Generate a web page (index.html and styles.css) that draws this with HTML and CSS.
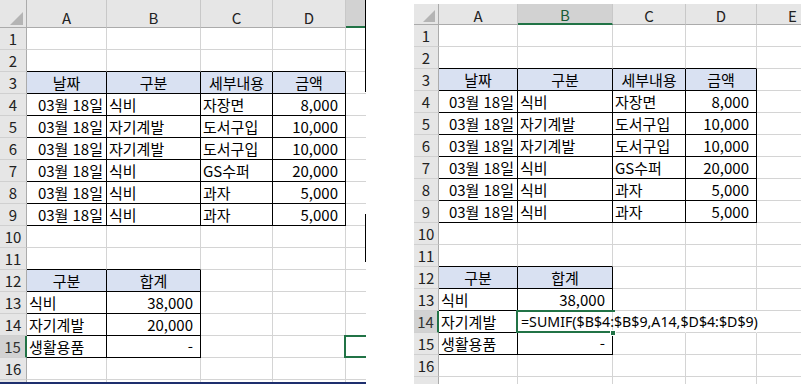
FILE: index.html
```html
<!DOCTYPE html>
<html lang="ko">
<head>
<meta charset="utf-8">
<title>SUMIF</title>
<link rel="stylesheet" href="styles.css">
</head>
<body>
<div class="page">
  <div class="sheet sheet-left">
    <table class="grid grid-left">
      <colgroup><col class="l-rh"><col class="l-a"><col class="l-b"><col class="l-c"><col class="l-d"><col class="l-e"></colgroup>
      <tr class="hdr"><th class="corner"><span class="tri"></span></th><th class="ch">A</th><th class="ch">B</th><th class="ch">C</th><th class="ch">D</th><th class="ch sel-col"></th></tr>
      <tr><th class="rh">1</th><td></td><td></td><td></td><td></td><td></td></tr>
      <tr><th class="rh">2</th><td class="bb"></td><td class="bb"></td><td class="bb"></td><td class="bb"></td><td></td></tr>
      <tr><th class="rh">3</th><td class="hd c br bb">날짜</td><td class="hd c br bb">구분</td><td class="hd c br bb">세부내용</td><td class="hd c br bb">금액</td><td></td></tr>
      <tr><th class="rh">4</th><td class="dt br bb">03월 18일</td><td class="l br bb">식비</td><td class="l br bb">자장면</td><td class="r br bb">8,000</td><td></td></tr>
      <tr><th class="rh">5</th><td class="dt br bb">03월 18일</td><td class="l br bb">자기계발</td><td class="l br bb">도서구입</td><td class="r br bb">10,000</td><td></td></tr>
      <tr><th class="rh">6</th><td class="dt br bb">03월 18일</td><td class="l br bb">자기계발</td><td class="l br bb">도서구입</td><td class="r br bb">10,000</td><td></td></tr>
      <tr><th class="rh">7</th><td class="dt br bb">03월 18일</td><td class="l br bb">식비</td><td class="l br bb">GS수퍼</td><td class="r br bb">20,000</td><td></td></tr>
      <tr><th class="rh">8</th><td class="dt br bb">03월 18일</td><td class="l br bb">식비</td><td class="l br bb">과자</td><td class="r br bb">5,000</td><td></td></tr>
      <tr><th class="rh">9</th><td class="dt br bb">03월 18일</td><td class="l br bb">식비</td><td class="l br bb">과자</td><td class="r br bb">5,000</td><td></td></tr>
      <tr><th class="rh">10</th><td></td><td></td><td></td><td></td><td></td></tr>
      <tr><th class="rh">11</th><td class="bb"></td><td class="bb"></td><td></td><td></td><td></td></tr>
      <tr><th class="rh">12</th><td class="hd c br bb">구분</td><td class="hd c br bb">합계</td><td></td><td></td><td></td></tr>
      <tr><th class="rh">13</th><td class="l br bb">식비</td><td class="r br bb">38,000</td><td></td><td></td><td></td></tr>
      <tr><th class="rh">14</th><td class="l br bb">자기계발</td><td class="r br bb">20,000</td><td></td><td></td><td></td></tr>
      <tr><th class="rh sel-row">15</th><td class="l br bb">생활용품</td><td class="r br bb">-</td><td></td><td></td><td class="active"></td></tr>
      <tr><th class="rh">16</th><td></td><td></td><td></td><td></td><td></td></tr>
      <tr><th class="rh"></th><td></td><td></td><td></td><td></td><td></td></tr>
    </table>
  </div>

  <div class="sheet sheet-right">
    <table class="grid grid-right">
      <colgroup><col class="r-rh"><col class="r-a"><col class="r-b"><col class="r-c"><col class="r-d"><col class="r-e"></colgroup>
      <tr class="hdr"><th class="corner"><span class="tri"></span></th><th class="ch">A</th><th class="ch sel-col">B</th><th class="ch">C</th><th class="ch">D</th><th class="ch">E</th></tr>
      <tr><th class="rh">1</th><td></td><td></td><td></td><td></td><td></td></tr>
      <tr><th class="rh">2</th><td class="bb"></td><td class="bb"></td><td class="bb"></td><td class="bb"></td><td></td></tr>
      <tr><th class="rh">3</th><td class="hd c br bb">날짜</td><td class="hd c br bb">구분</td><td class="hd c br bb">세부내용</td><td class="hd c br bb">금액</td><td></td></tr>
      <tr><th class="rh">4</th><td class="dt br bb">03월 18일</td><td class="l br bb">식비</td><td class="l br bb">자장면</td><td class="r br bb">8,000</td><td></td></tr>
      <tr><th class="rh">5</th><td class="dt br bb">03월 18일</td><td class="l br bb">자기계발</td><td class="l br bb">도서구입</td><td class="r br bb">10,000</td><td></td></tr>
      <tr><th class="rh">6</th><td class="dt br bb">03월 18일</td><td class="l br bb">자기계발</td><td class="l br bb">도서구입</td><td class="r br bb">10,000</td><td></td></tr>
      <tr><th class="rh">7</th><td class="dt br bb">03월 18일</td><td class="l br bb">식비</td><td class="l br bb">GS수퍼</td><td class="r br bb">20,000</td><td></td></tr>
      <tr><th class="rh">8</th><td class="dt br bb">03월 18일</td><td class="l br bb">식비</td><td class="l br bb">과자</td><td class="r br bb">5,000</td><td></td></tr>
      <tr><th class="rh">9</th><td class="dt br bb">03월 18일</td><td class="l br bb">식비</td><td class="l br bb">과자</td><td class="r br bb">5,000</td><td></td></tr>
      <tr><th class="rh">10</th><td></td><td></td><td></td><td></td><td></td></tr>
      <tr><th class="rh">11</th><td class="bb"></td><td class="bb"></td><td></td><td></td><td></td></tr>
      <tr><th class="rh">12</th><td class="hd c br bb">구분</td><td class="hd c br bb">합계</td><td></td><td></td><td></td></tr>
      <tr><th class="rh">13</th><td class="l br bb">식비</td><td class="r br bb">38,000</td><td></td><td></td><td></td></tr>
      <tr><th class="rh sel-row">14</th><td class="l br bb">자기계발</td><td class="l editing"><span class="formula">=SUMIF($B$4:$B$9,A14,$D$4:$D$9)</span><span class="handle"></span></td><td class="ov"></td><td class="ov"></td><td></td></tr>
      <tr><th class="rh">15</th><td class="l br bb">생활용품</td><td class="r br bb">-</td><td></td><td></td><td></td></tr>
      <tr><th class="rh">16</th><td></td><td></td><td></td><td></td><td></td></tr>
      <tr><th class="rh"></th><td></td><td></td><td></td><td></td><td></td></tr>
    </table>
  </div>
</div>
</body>
</html>
```

FILE: styles.css
```css
* { box-sizing: border-box; }

html, body {
  margin: 0;
  padding: 0;
  background: #fff;
}

body {
  width: 801px;
  height: 384px;
  overflow: hidden;
  font-family: "Noto Sans CJK KR", "Noto Sans", sans-serif;
  font-size: 15px;
  color: #000;
}

.page {
  display: flex;
  justify-content: space-between;
  align-items: flex-start;
  width: 801px;
  height: 384px;
}

.sheet {
  position: relative;
  overflow: hidden;
  height: 384px;
}

.sheet-left {
  width: 366px;
  border-bottom: 2px solid #1e2f6e;
}

/* window edge artefacts on the right of the left capture */
.sheet-left::before,
.sheet-left::after {
  content: "";
  position: absolute;
  left: 365px;
  width: 1px;
  background: #000;
}
.sheet-left::before { top: 0; height: 92px; }
.sheet-left::after { top: 214px; height: 48px; }

.sheet-right {
  width: 387px;
  padding-top: 4px;
}

.grid {
  border-collapse: separate;
  border-spacing: 0;
  table-layout: fixed;
}
.grid-left { width: 418px; }
.grid-right { width: 415px; }

.l-rh { width: 27px; }
.l-a { width: 80px; }
.l-b { width: 94px; }
.l-c { width: 72px; }
.l-d { width: 73px; }
.l-e { width: 72px; }

.r-rh { width: 25px; }
.r-a { width: 79px; }
.r-b { width: 95px; }
.r-c { width: 73px; }
.r-d { width: 71px; }
.r-e { width: 72px; }

.grid td,
.grid th {
  padding: 0;
  height: 22px;
  line-height: 20px;
  border-right: 1px solid #d4d4d4;
  border-bottom: 1px solid #d4d4d4;
  white-space: nowrap;
  overflow: hidden;
  font-weight: normal;
  vertical-align: middle;
}

/* column headers */
.grid .hdr th {
  background: #e6e6e6;
  color: #222;
  text-align: center;
  vertical-align: bottom;
  border-right-color: #c8c8c8;
  border-bottom-color: #ababab;
}
.grid-left .hdr th { height: 28px; line-height: 19px; }
.grid-right .hdr th { height: 21px; line-height: 17px; }

.grid .hdr th.corner {
  text-align: right;
  padding: 0 3px 2px 0;
  line-height: 0;
  border-right-color: #ababab;
}
.tri {
  display: inline-block;
  width: 0;
  height: 0;
  border-left: 13px solid transparent;
  border-bottom: 13px solid #b4b4b4;
}
.grid-right .tri {
  border-left-width: 12px;
  border-bottom-width: 12px;
}

/* row headers */
.grid th.rh {
  background: #e6e6e6;
  color: #222;
  text-align: center;
  border-right-color: #ababab;
  border-bottom-color: #d0d0d0;
}

.grid .hdr th.sel-col {
  background: #d2d2d2;
  color: #1b5e37;
  border-bottom: 2px solid #217346;
}
.grid th.rh.sel-row {
  background: #d2d2d2;
  color: #333;
  border-right: 2px solid #217346;
}

/* cell formatting */
.grid td.hd { background: #d9e1f2; }
.grid td.br { border-right-color: #000; }
.grid td.bb { border-bottom-color: #000; }
.c { text-align: center; }
.l { text-align: left; padding-left: 2px !important; }
.r { text-align: right; padding-right: 7px !important; }
.dt { text-align: right; padding-right: 3px !important; }

/* active cell */
.grid td.active,
.grid td.editing {
  position: relative;
  overflow: visible;
}
.grid td.active::after,
.grid td.editing::after {
  content: "";
  position: absolute;
  left: -2px;
  top: -1px;
  right: -1px;
  bottom: -1px;
  border: 2px solid #217346;
  pointer-events: none;
}
.grid td.editing::after {
  right: -3px;
  border-right-width: 0;
}
.grid td.editing { padding-left: 3px !important; }
.formula {
  position: relative;
  z-index: 1;
  font-family: "Noto Sans", "Noto Sans CJK KR", sans-serif;
  font-size: 14.2px;
}
.handle {
  position: absolute;
  right: -4px;
  bottom: -4px;
  width: 6px;
  height: 6px;
  background: #217346;
  border: 1px solid #fff;
  z-index: 2;
}
.grid td.ov { border-right-color: #fff; }
```
